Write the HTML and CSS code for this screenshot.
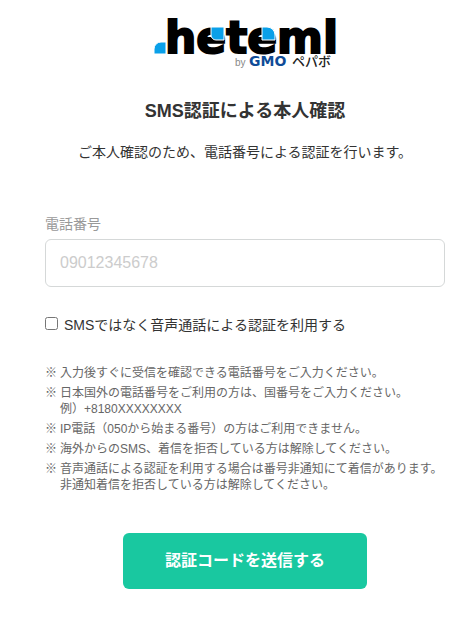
FILE: index.html
```html
<!DOCTYPE html>
<html lang="ja">
<head>
    <meta charset="UTF-8">
    <title>SMS認証による本人確認</title>
    <meta name="viewport" content="width=device-width, initial-scale=1">
    <link rel="stylesheet" href="styles.css">
</head>
<body>
<main class="auth">
    <header class="auth-header">
        <svg class="logo" width="188" height="58" viewBox="0 0 188 58" role="img" aria-label="heteml by GMOペパボ">
            <path class="logo-blue" d="M3 42V37a7 7 0 0 1 7-7H15V42Z"/>
            <text class="logo-name" x="14" y="41">heteml</text>
            <path class="logo-blue" d="M60 15H73V28H65a5 5 0 0 1-5-5Z"/>
            <path class="logo-blue" d="M111 15H116a8 8 0 0 1 8 8V28H111Z"/>
            <text class="logo-by" x="84" y="54">by</text>
            <text class="logo-gmo" x="98" y="54">GMO</text>
            <text class="logo-pepabo" x="141" y="54">ペパボ</text>
        </svg>
        <h1>SMS認証による本人確認</h1>
        <p>ご本人確認のため、電話番号による認証を行います。</p>
    </header>
    <form class="auth-form">
        <label class="field-label" for="tel">電話番号</label>
        <input class="field" type="tel" id="tel" placeholder="09012345678">
        <div class="check">
            <input type="checkbox" id="voice">
            <label for="voice">SMSではなく音声通話による認証を利用する</label>
        </div>
        <ul class="notes">
            <li>入力後すぐに受信を確認できる電話番号をご入力ください。</li>
            <li>日本国外の電話番号をご利用の方は、国番号をご入力ください。<br>例）+8180XXXXXXXX</li>
            <li>IP電話（050から始まる番号）の方はご利用できません。</li>
            <li>海外からのSMS、着信を拒否している方は解除してください。</li>
            <li>音声通話による認証を利用する場合は番号非通知にて着信があります。<br>非通知着信を拒否している方は解除してください。</li>
        </ul>
        <button class="submit" type="submit">認証コードを送信する</button>
    </form>
</main>
</body>
</html>
```
FILE: styles.css
```css
body,h1,p,ul{margin: 0;padding: 0;}
li{list-style: none;}
body,input,button{font-family: "Liberation Sans","Noto Sans CJK JP",sans-serif;}
body{ color: #333; background-color: #fff; font-size: 14px; line-height: 20px; }
.auth{ padding: 12px 20px 28px 45px; }
.auth-header{ text-align: center; }
.logo{ display: block; margin: 0 auto; }
.logo-blue{ fill: #0aa0e9; stroke: #fff; stroke-width: 1px; }
.logo-name{ font: bold 44px "DejaVu Sans",sans-serif; fill: #000; stroke: #000; stroke-width: 2px; }
.logo-by{ font-size: 10px; fill: #888; }
.logo-gmo{ font: bold 14px "DejaVu Sans",sans-serif; fill: #0f4c97; }
.logo-pepabo{ font: 500 13px "Noto Sans CJK JP",sans-serif; fill: #222; }
.auth-header h1{ margin-top: 26px; font-size: 18px; line-height: 30px; }
.auth-header p{ margin-top: 16px; }
.auth-form{ display: flex; flex-direction: column; margin-top: 52px; }
.field-label{ color: #999; }
.field{ box-sizing: border-box; width: 100%; height: 48px; margin: 5px 0 0; padding: 0 14px;
        border: 1px solid #d5d8d8; border-radius: 6px; color: #333; background: #fff; font-size: 16px; }
.field::placeholder{ color: #ccc; opacity: 1; }
.check{ display: flex; align-items: center; gap: 6px; margin-top: 28px; }
.check input{ width: 13px; height: 13px; margin: 0 0 4px; }
.notes{ display: grid; gap: 4px; margin-top: 30px; color: #666; font-size: 12px; line-height: 16px; }
.notes li{ display: flex; white-space: nowrap; }
.notes li::before{ content: "※"; width: 15px; flex: none; }
.submit{ align-self: center; width: 61%; height: 56px; margin-top: 40px; padding: 0 0 4px; border: none; border-radius: 6px;
         color: #fff; background: #19c8a0; font-size: 16px; font-weight: bold; cursor: pointer; }
```
